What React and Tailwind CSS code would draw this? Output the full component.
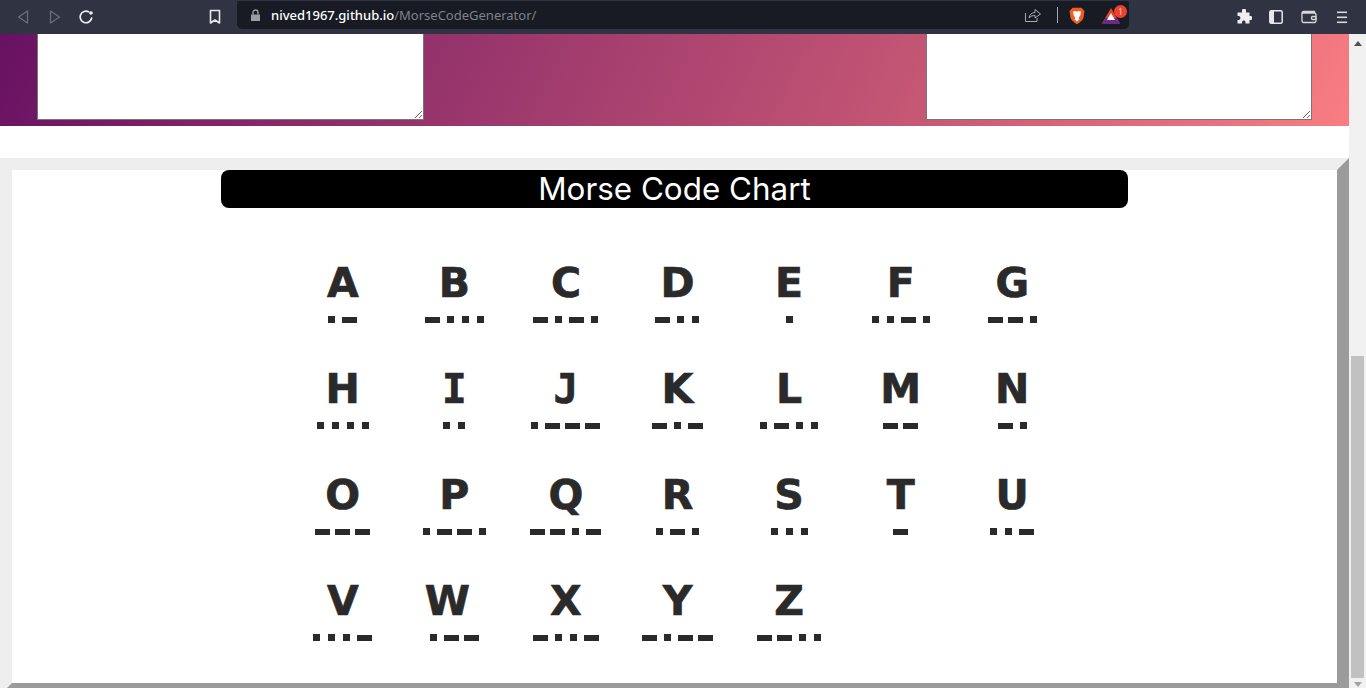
const MORSE = [
  ['A', '.-'], ['B', '-...'], ['C', '-.-.'], ['D', '-..'], ['E', '.'], ['F', '..-.'], ['G', '--.'],
  ['H', '....'], ['I', '..'], ['J', '.---'], ['K', '-.-'], ['L', '.-..'], ['M', '--'], ['N', '-.'],
  ['O', '---'], ['P', '.--.'], ['Q', '--.-'], ['R', '.-.'], ['S', '...'], ['T', '-'], ['U', '..-'],
  ['V', '...-'], ['W', '.--'], ['X', '-..-'], ['Y', '-.--'], ['Z', '--..'],
]

function gapClass(prev, cur) {
  if (!prev) return ''
  if (prev === '.' && cur === '.') return 'ml-[8px]'
  if (prev === '-' && cur === '-') return 'ml-[5px]'
  return 'ml-[7px]'
}

function Signal({ code }) {
  return (
    <div className="flex h-[7px] items-center justify-center">
      {code.split('').map((c, i) => (
        <span key={i} className={`${c === '.' ? 'h-[7px] w-[7px]' : 'h-[6px] w-[15px]'} bg-[#2a2a2a] ${gapClass(code[i - 1], c)}`} />
      ))}
    </div>
  )
}

function Toolbar() {
  return (
    <div className="flex h-[34px] items-center bg-[#2f3342] text-[#e8e8ea]">
      <div className="flex w-[237px] items-center">
        <svg className="ml-[16px]" width="14" height="16" viewBox="0 0 14 16" fill="none" stroke="#6a6e7a" strokeWidth="1.3"><path d="M11.5 2 L2.5 8 L11.5 14 Z" strokeLinejoin="round" /></svg>
        <svg className="ml-[18px]" width="14" height="16" viewBox="0 0 14 16" fill="none" stroke="#6a6e7a" strokeWidth="1.3"><path d="M2.5 2 L11.5 8 L2.5 14 Z" strokeLinejoin="round" /></svg>
        <svg className="ml-[16px]" width="16" height="16" viewBox="0 0 16 16" fill="none" stroke="#f0f0f2" strokeWidth="1.7"><path d="M13.6 9.2A5.8 5.8 0 1 1 10.6 2.8" strokeLinecap="round" /><circle cx="13" cy="4" r="1.8" fill="#f0f0f2" stroke="none" /></svg>
        <svg className="ml-[115px]" width="12" height="16" viewBox="0 0 12 16" fill="none" stroke="#e8e8ea" strokeWidth="1.6"><path d="M1.5 1.5H10.5V14L6 11L1.5 14Z" strokeLinejoin="round" /></svg>
      </div>
      <div className="flex h-[28px] w-[892px] -translate-y-[2px] items-center rounded-b-[5px] rounded-t-[2px] bg-[#181b24]">
        <svg className="ml-[13px]" width="11" height="13" viewBox="0 0 11 13" fill="#9a9da6"><path d="M1 5.5H10V12H1Z" /><path d="M3 5.5V3.5A2.5 2.5 0 0 1 8 3.5V5.5" fill="none" stroke="#9a9da6" strokeWidth="1.4" /></svg>
        <span className="ml-[10px] mt-[2px] font-['Noto_Sans'] text-[13px] font-medium text-white">nived1967.github.io<span className="font-normal text-[#7f828c]">/MorseCodeGenerator/</span></span>
        <div className="ml-auto flex items-center">
          <svg width="18" height="16" viewBox="0 0 18 16" fill="none" stroke="#a6a8b0" strokeWidth="1"><path d="M1.5 6V14.5H13V11" /><path d="M5 11C5.5 7.5 8 5.5 11 5.5V2.5L16.5 7L11 11V8.5C8.5 8.5 6.5 9.2 5 11Z" strokeLinejoin="round" /></svg>
          <span className="ml-[15px] h-[16px] w-px bg-[#a6a8b0]" />
          <svg className="ml-[11px] mt-[2px]" width="16" height="18" viewBox="0 0 16 18"><path d="M3.5 0.8H12.5L15.5 4L14.5 10.5C14 13 10.5 16 8 17.2C5.5 16 2 13 1.5 10.5L0.5 4Z" fill="#f15a22" /><path d="M4 4.5L6.5 4L8 4.8L9.5 4L12 4.5L11.3 8.5L9.8 10.5L10.4 12.5L8 14.5L5.6 12.5L6.2 10.5L4.7 8.5Z" fill="#fff" /></svg>
          <div className="relative ml-[17px] mr-[9px] h-[18px] w-[18px]">
            <svg width="18" height="17" viewBox="0 0 18 17" className="absolute left-0 top-[1px]"><path d="M9 1L18 16.5H0Z" fill="#e8452c" /><path d="M3.5 11H14.5L18 16.5H0Z" fill="#662d91" /><path d="M9 6L13 13H5Z" fill="#fff" /></svg>
            <span className="absolute -right-[7px] -top-[1px] flex h-[13px] w-[13px] items-center justify-center rounded-full bg-[#f0412f] font-['Noto_Sans'] text-[8px] leading-none text-[#ffd5d0]">1</span>
          </div>
        </div>
      </div>
      <div className="flex flex-1 items-center">
        <svg className="ml-[107px]" width="16" height="16" viewBox="0 0 16 16" fill="#eeeeF0"><path d="M6 1.5A2 2 0 0 1 10 1.5V3.5H13.5V7H15A2.2 2.2 0 0 1 15 11H13.5V14.5H9.5V13A1.8 1.8 0 0 0 6 13V14.5H1.5V11H3A2.1 2.1 0 0 0 3 7H1.5V3.5H6Z" /></svg>
        <svg className="ml-[17px]" width="14" height="14" viewBox="0 0 14 14"><rect x="0.8" y="0.8" width="12.4" height="12.4" rx="1.5" fill="none" stroke="#e8e8ea" strokeWidth="1.5" /><rect x="1" y="1" width="4" height="12" fill="#e8e8ea" /></svg>
        <svg className="ml-[18px]" width="16" height="14" viewBox="0 0 16 14" fill="none" stroke="#d8d8dc" strokeWidth="1.3"><path d="M13.5 3V1.5H2.5A1.5 1.5 0 0 0 1 3V11A1.5 1.5 0 0 0 2.5 12.5H13.5A1.5 1.5 0 0 0 15 11V4.5A1.5 1.5 0 0 0 13.5 3H1.5" /><rect x="10.5" y="6.5" width="4.5" height="3" rx="1" /></svg>
        <svg className="ml-[20px]" width="10" height="13" viewBox="0 0 10 13" fill="#d8d8dc"><rect width="10" height="1.6" y="0.5" /><rect width="10" height="1.6" y="5.5" /><rect width="10" height="1.6" y="10.5" /></svg>
      </div>
    </div>
  )
}

function Scrollbar() {
  return (
    <div className="relative w-[17px] shrink-0 bg-[#f1f1f1]">
      <span className="absolute left-[5px] top-[7px] h-0 w-0 border-x-[4px] border-b-[5px] border-x-transparent border-b-[#505050]" />
      <div className="absolute left-[2px] top-[322px] h-[322px] w-[13px] bg-[#c1c1c1]" />
      <span className="absolute bottom-[1px] left-[5px] h-0 w-0 border-x-[4px] border-t-[5px] border-x-transparent border-t-[#a3a3a3]" />
    </div>
  )
}

export default function App() {
  return (
    <div className="flex h-[688px] flex-col overflow-hidden bg-white">
      <Toolbar />
      <div className="flex min-h-0 flex-1">
        <div className="min-w-0 flex-1 overflow-hidden">
          {/* scrolled past the top of the converter */}
          <div className="-mt-[308px] flex h-[400px] items-end justify-between bg-[linear-gradient(115deg,#5a0760_0%,#c75875_72%,#f97d82_100%)] pb-[6px] pl-[37px] pr-[37px]">
            <textarea className="h-[200px] w-[387px] border border-[#767676] bg-white" />
            <textarea className="h-[200px] w-[386px] border border-[#767676] bg-white" />
          </div>
          <div className="h-[32px]" />
          <section className="border-[12px] border-b-[#9b9b9b] border-l-[#eeeeee] border-r-[#9b9b9b] border-t-[#eeeeee] bg-white">
            <h1 className="mx-auto flex h-[38px] w-[907px] items-center justify-center rounded-[8px] bg-black pt-[2px] font-['Inter'] text-[31.4px] font-normal text-white">Morse Code Chart</h1>
            <div className="ml-[275px] mt-[50px] grid w-[781px] grid-cols-7 pb-px">
              {MORSE.map(([letter, code]) => (
                <div key={letter} className="flex h-[106px] flex-col items-center">
                  <span className={`h-[48px] ${letter === 'I' || letter === 'J' ? "font-['DejaVu_Sans_Mono']" : "font-['DejaVu_Sans']"} text-[41px] font-bold leading-[50px] text-[#2a2a2a] [-webkit-text-stroke:0.7px_#2a2a2a] ${letter === 'W' ? '-translate-x-[7px]' : ''}`}>{letter}</span>
                  <div className="mt-[10px]"><Signal code={code} /></div>
                </div>
              ))}
            </div>
          </section>
        </div>
        <Scrollbar />
      </div>
    </div>
  )
}
